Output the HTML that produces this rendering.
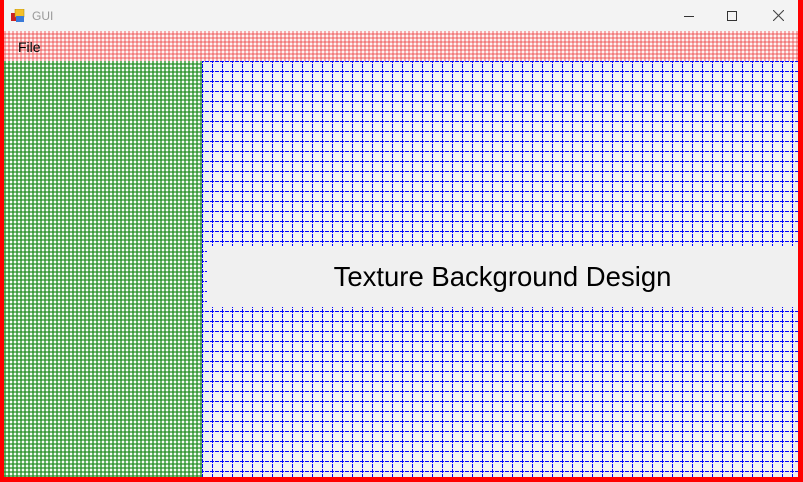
<!DOCTYPE html>
<html><head><style>
*{margin:0;padding:0}
body{width:803px;height:482px;position:relative;overflow:hidden;background:#f00;font-family:"Liberation Sans",sans-serif}
#win{position:absolute;left:4px;top:0;width:794px;height:477px;background:#f0f0f0;overflow:hidden}
#title{position:absolute;left:0;top:0;width:794px;height:31px;background:#f3f3f3}
#menu{position:absolute;left:0;top:31px;width:794px;height:30px;background-color:#fdf3f3;
background-image:linear-gradient(90deg,rgba(235,60,60,.4) 50%,transparent 50%),linear-gradient(0deg,rgba(235,60,60,.4) 50%,transparent 50%);background-size:4px 4px,4px 4px}
#green{position:absolute;left:0;top:61px;width:198px;height:416px;background-color:#f4fbf4;
background-image:linear-gradient(90deg,rgba(30,140,30,.65) 50%,transparent 50%),linear-gradient(0deg,rgba(30,140,30,.6) 50%,transparent 50%);background-size:4px 4px,4px 4px}
#grid{position:absolute;left:198px;top:61px}
#band{position:absolute;left:203px;top:246px;width:591px;height:61px;background:#f0f0f0;font-size:27.5px;text-align:center;line-height:62px;color:#000}
</style></head><body>
<div id="win">
<div id="title">
<svg style="position:absolute;left:7px;top:9px" width="14" height="14"><rect x="0" y="4" width="6" height="8" fill="#c22"/><rect x="4" y="0" width="9" height="8" fill="#f5c02a" stroke="#a80" stroke-width=".5"/><rect x="5" y="7" width="8" height="6" fill="#3a7ad8"/></svg>
<span style="position:absolute;left:28px;top:9px;font-size:12px;color:#999">GUI</span>
<div style="position:absolute;left:680px;top:16px;width:10px;height:1px;background:#333"></div>
<div style="position:absolute;left:723px;top:11px;width:8px;height:8px;border:1px solid #333"></div>
<svg style="position:absolute;left:769px;top:10px" width="11" height="11"><path d="M0 0L11 11M11 0L0 11" stroke="#444" stroke-width="1.1"/></svg>
</div>
<div id="menu"><span style="position:absolute;left:14px;top:8px;font-size:14px;color:#000">File</span></div>
<div id="green"></div>
<svg id="grid" width="596" height="416">
<defs><pattern id="p" width="10" height="10" patternUnits="userSpaceOnUse">
<path d="M0.5 0V10M0 0.5H10" stroke="#0000ff" stroke-width="1" stroke-dasharray="4 1" stroke-dashoffset="2" fill="none"/>
</pattern></defs>
<rect width="596" height="416" fill="#f0f0f0"/>
<rect width="596" height="416" fill="url(#p)"/>
</svg>
<div id="band">Texture Background Design</div>
</div>
</body></html>
